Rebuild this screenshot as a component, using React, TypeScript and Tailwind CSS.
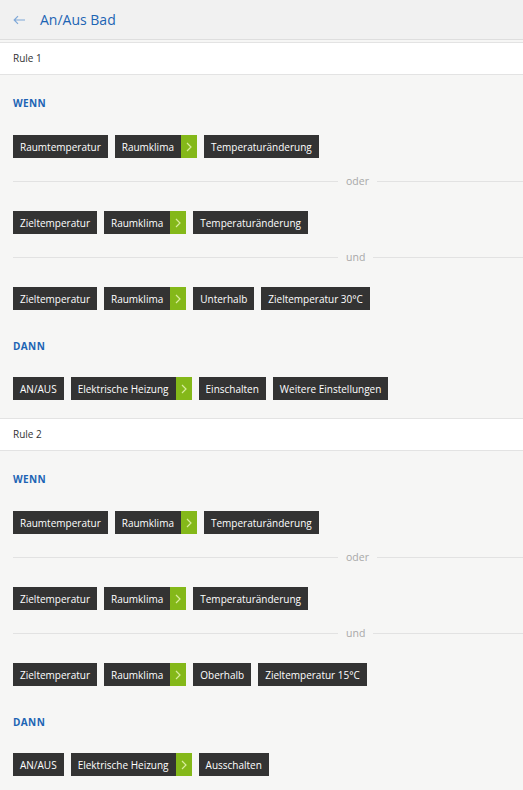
import React from "react";

type ChipItem = { text: string; arrow?: boolean };

function Chip({ text, arrow }: ChipItem) {
  return (
    <div className="flex h-[23px] items-stretch bg-[#333333] text-white">
      <span className="flex items-center px-[7px] text-[10px] leading-none">{text}</span>
      {arrow && (
        <span className="flex w-[16px] items-center justify-center bg-[#84b819]">
          <svg width="6" height="10" viewBox="0 0 6 10" fill="none">
            <path d="M1 1l4 4-4 4" stroke="#d8ec9c" strokeWidth="1.2" />
          </svg>
        </span>
      )}
    </div>
  );
}

function Row({ items, className }: { items: ChipItem[]; className: string }) {
  return (
    <div className={`flex gap-[7px] ${className}`}>
      {items.map((it, i) => (
        <Chip key={i} {...it} />
      ))}
    </div>
  );
}

function Divider({ label, className }: { label: string; className: string }) {
  return (
    <div className={`flex h-[16px] items-center ${className}`}>
      <div className="h-px w-[325px] bg-[#e2e2e2]" />
      <span className="px-[8px] text-[10.5px] leading-none text-[#a8a8a8]">{label}</span>
      <div className="h-px flex-1 bg-[#e2e2e2]" />
    </div>
  );
}

function Heading({ text, className }: { text: string; className: string }) {
  return (
    <div className={`h-[14px] text-[10px] font-bold leading-[14px] tracking-[0.04em] text-[#1c64b4] ${className}`}>
      {text}
    </div>
  );
}

function RuleBar({ text, className }: { text: string; className: string }) {
  return (
    <div className={`flex h-[33px] items-center border-y border-[#e3e3e3] bg-white pl-[13px] text-[10px] text-[#333] ${className}`}>
      {text}
    </div>
  );
}

export default function App() {
  return (
    <div
      className="h-[790px] w-[523px] overflow-hidden bg-[#f6f6f5]"
      style={{ fontFamily: '"Open Sans", "Noto Sans", sans-serif' }}
    >
      <div className="flex h-[40px] items-center border-b border-[#dedede] bg-[#f1f1f1] pl-[13px]">
        <svg width="13" height="10" viewBox="0 0 13 10" fill="none" className="mr-[14px]">
          <path d="M12 5H1.5M5 1.2L1.2 5 5 8.8" stroke="#7fa8d8" strokeWidth="1.2" />
        </svg>
        <span className="text-[14px] leading-none text-[#1c64b4]">An/Aus Bad</span>
      </div>

      <RuleBar text="Rule 1" className="mt-[2px]" />
      <div className="pl-[13px]">
        <Heading text="WENN" className="mt-[21px]" />
        <Row
          className="mt-[25px]"
          items={[{ text: "Raumtemperatur" }, { text: "Raumklima", arrow: true }, { text: "Temperaturänderung" }]}
        />
        <Divider label="oder" className="mt-[15px]" />
        <Row
          className="mt-[22px]"
          items={[{ text: "Zieltemperatur" }, { text: "Raumklima", arrow: true }, { text: "Temperaturänderung" }]}
        />
        <Divider label="und" className="mt-[15px]" />
        <Row
          className="mt-[22px]"
          items={[
            { text: "Zieltemperatur" },
            { text: "Raumklima", arrow: true },
            { text: "Unterhalb" },
            { text: "Zieltemperatur 30°C" },
          ]}
        />
        <Heading text="DANN" className="mt-[29px]" />
        <Row
          className="mt-[24px]"
          items={[
            { text: "AN/AUS" },
            { text: "Elektrische Heizung", arrow: true },
            { text: "Einschalten" },
            { text: "Weitere Einstellungen" },
          ]}
        />
      </div>

      <RuleBar text="Rule 2" className="mt-[18px]" />
      <div className="pl-[13px]">
        <Heading text="WENN" className="mt-[21px]" />
        <Row
          className="mt-[25px]"
          items={[{ text: "Raumtemperatur" }, { text: "Raumklima", arrow: true }, { text: "Temperaturänderung" }]}
        />
        <Divider label="oder" className="mt-[15px]" />
        <Row
          className="mt-[22px]"
          items={[{ text: "Zieltemperatur" }, { text: "Raumklima", arrow: true }, { text: "Temperaturänderung" }]}
        />
        <Divider label="und" className="mt-[15px]" />
        <Row
          className="mt-[22px]"
          items={[
            { text: "Zieltemperatur" },
            { text: "Raumklima", arrow: true },
            { text: "Oberhalb" },
            { text: "Zieltemperatur 15°C" },
          ]}
        />
        <Heading text="DANN" className="mt-[29px]" />
        <Row
          className="mt-[24px]"
          items={[{ text: "AN/AUS" }, { text: "Elektrische Heizung", arrow: true }, { text: "Ausschalten" }]}
        />
      </div>
    </div>
  );
}
